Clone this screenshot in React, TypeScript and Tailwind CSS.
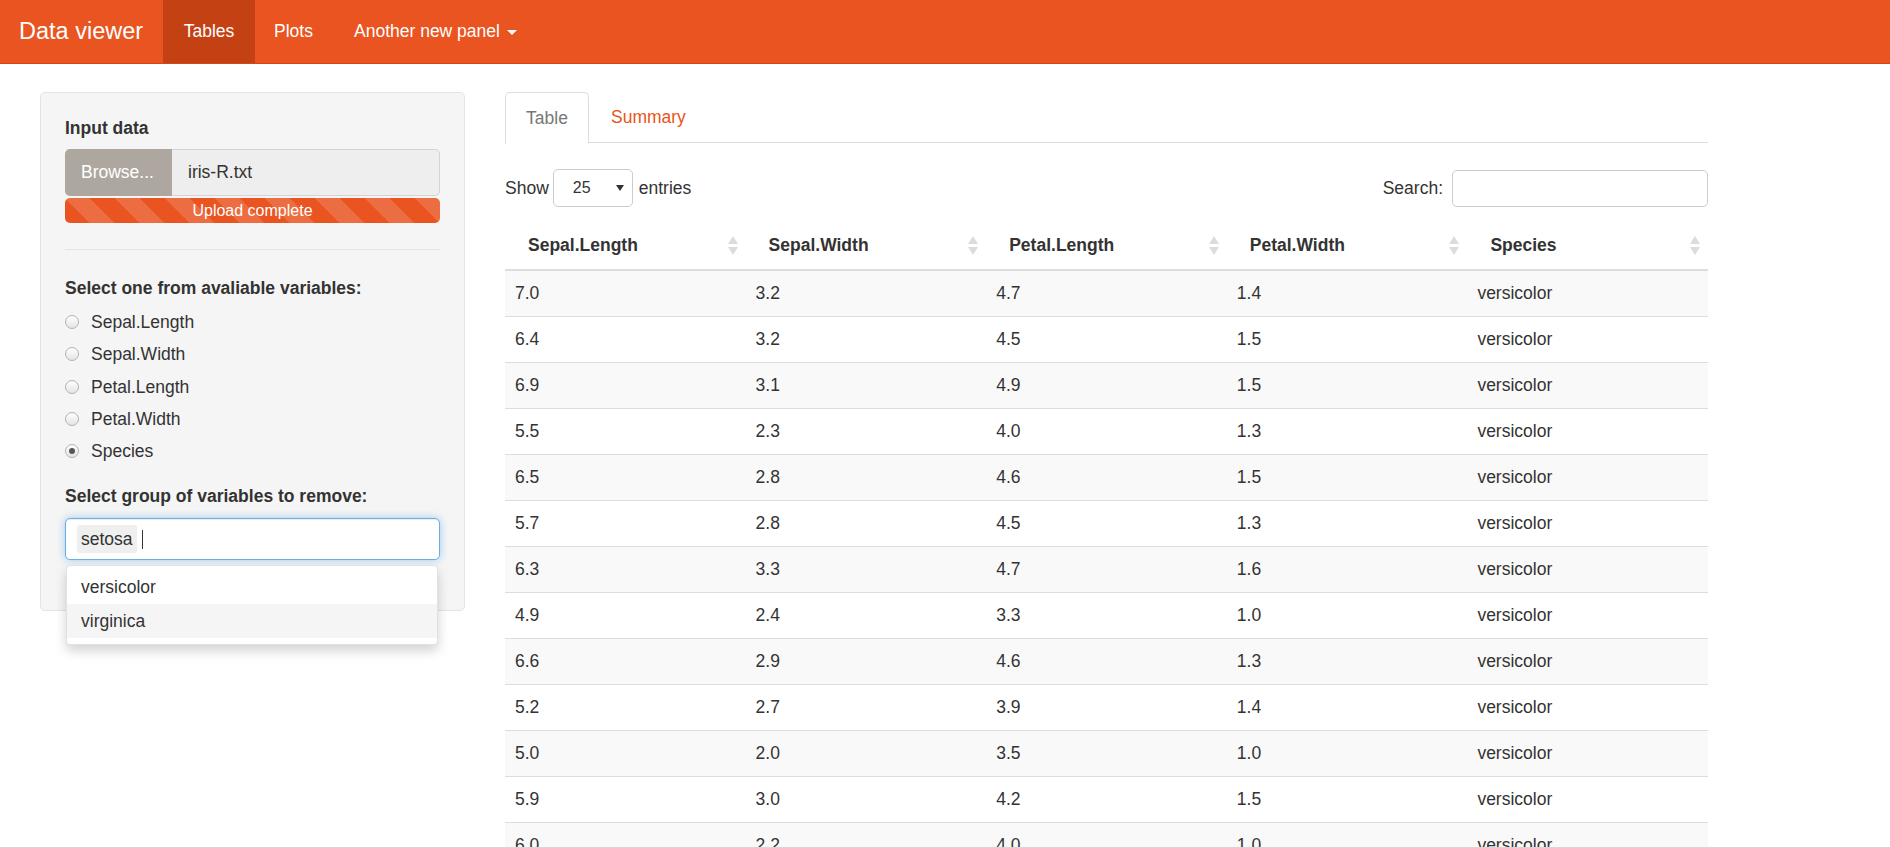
import React from "react";

const rows = [
  ["7.0", "3.2", "4.7", "1.4"],
  ["6.4", "3.2", "4.5", "1.5"],
  ["6.9", "3.1", "4.9", "1.5"],
  ["5.5", "2.3", "4.0", "1.3"],
  ["6.5", "2.8", "4.6", "1.5"],
  ["5.7", "2.8", "4.5", "1.3"],
  ["6.3", "3.3", "4.7", "1.6"],
  ["4.9", "2.4", "3.3", "1.0"],
  ["6.6", "2.9", "4.6", "1.3"],
  ["5.2", "2.7", "3.9", "1.4"],
  ["5.0", "2.0", "3.5", "1.0"],
  ["5.9", "3.0", "4.2", "1.5"],
  ["6.0", "2.2", "4.0", "1.0"],
  ["6.1", "2.9", "4.7", "1.4"],
];

const columns = ["Sepal.Length", "Sepal.Width", "Petal.Length", "Petal.Width", "Species"];

const SortIcon = () => (
  <svg width="10" height="19" viewBox="0 0 10 19" className="shrink-0">
    <path d="M5 0 L10 8 L0 8 Z" fill="#dcdcdc" />
    <path d="M0 11 L10 11 L5 19 Z" fill="#dcdcdc" />
  </svg>
);

const Radio = ({ label, checked }: { label: string; checked?: boolean }) => (
  <div className="flex items-center h-[32.3px]">
    <span className="w-[14px] h-[14px] rounded-full border border-[#b3b3b3] bg-[linear-gradient(#ffffff,#e4e4e4)] flex items-center justify-center">
      {checked && <span className="w-[6px] h-[6px] rounded-full bg-[#555]" />}
    </span>
    <span className="ml-[12px]">{label}</span>
  </div>
);

const Navbar = () => (
  <nav className="flex h-[64px] bg-[#e95420] border-b border-[#d34615] text-white">
    <div className="w-[163px] pl-[19px] flex items-center text-[23.5px]">Data viewer</div>
    <ul className="flex text-[17.5px]">
      <li className="w-[92px] flex items-center justify-center bg-[#c34113]">Tables</li>
      <li className="w-[80px] pl-[19px] flex items-center">Plots</li>
      <li className="pl-[19px] pr-[19px] flex items-center">
        Another new panel
        <span className="ml-[7px] mt-[2px] w-0 h-0 border-l-[5px] border-r-[5px] border-t-[5px] border-l-transparent border-r-transparent border-t-white" />
      </li>
    </ul>
  </nav>
);

const Sidebar = () => (
  <div className="w-[425px] shrink-0 relative">
    <div className="bg-[#f5f5f5] border border-[#e3e3e3] rounded-[5px] px-[24px] pt-[23px] pb-[24px]">
      <div className="font-bold h-[25px] leading-[25px]">Input data</div>
      <div className="mt-[8px] flex h-[47px]">
        <div className="w-[107px] bg-[#aea79f] text-white rounded-l-[5px] flex items-center pl-[16px]">Browse...</div>
        <div className="flex-1 bg-[#eeeeee] border border-[#d4d4d4] border-l-0 rounded-r-[5px] flex items-center pl-[16px]">iris-R.txt</div>
      </div>
      <div className="mt-[2px] h-[25px] rounded-[5px] bg-[#e95420] bg-[linear-gradient(45deg,rgba(255,255,255,.15)_25%,transparent_25%,transparent_50%,rgba(255,255,255,.15)_50%,rgba(255,255,255,.15)_75%,transparent_75%,transparent)] bg-[length:50px_50px] text-white text-[16px] flex items-center justify-center pt-[1px]">
        Upload complete
      </div>
      <div className="mt-[26px] border-t border-[#e5e5e5]" />
      <div className="mt-[26px] font-bold h-[25px] leading-[25px]">Select one from avaliable variables:</div>
      <div className="mt-[5px] flex flex-col">
        <Radio label="Sepal.Length" />
        <Radio label="Sepal.Width" />
        <Radio label="Petal.Length" />
        <Radio label="Petal.Width" />
        <Radio label="Species" checked />
      </div>
      <div className="mt-[17px] font-bold h-[25px] leading-[25px]">Select group of variables to remove:</div>
      <div className="mt-[9px] h-[42px] rounded-[5px] bg-white border border-[#66afe9] shadow-[inset_0_1px_1px_rgba(0,0,0,.075),0_0_8px_rgba(102,175,233,.6)] flex items-center pl-[11px]">
        <span className="h-[28px] px-[4px] rounded-[3px] bg-[#efefef] flex items-center">setosa</span>
        <span className="ml-[5px] w-px h-[19px] bg-[#333]" />
      </div>
      <div className="h-[26px]" />
    </div>
    <div className="absolute left-[26px] top-[473px] w-[372px] bg-white rounded-[4px] border border-[#e2e2e2] shadow-[0_6px_12px_rgba(0,0,0,.175)] pt-[4px] pb-[6px]">
      <div className="h-[34px] flex items-center pl-[14px]">versicolor</div>
      <div className="h-[34px] flex items-center pl-[14px] bg-[#f5f5f5]">virginica</div>
    </div>
  </div>
);

const MainPanel = () => (
  <div className="w-[1203px] shrink-0">
    <div className="flex h-[51px] border-b border-[#dddddd]">
      <div className="w-[84px] -mb-px h-[52px] border border-[#dddddd] border-b-white bg-white rounded-t-[5px] flex items-center justify-center text-[#777]">
        Table
      </div>
      <div className="ml-[3px] px-[19px] flex items-center text-[#e95420]">Summary</div>
    </div>
    <div className="mt-[26px] flex items-center justify-between h-[38px]">
      <div className="flex items-center">
        <span>Show</span>
        <div className="ml-[4px] w-[80px] h-[38px] border border-[#cccccc] rounded-[5px] flex items-center justify-between pl-[19px] pr-[8px] text-[16px]">
          <span>25</span>
          <span className="w-0 h-0 border-l-[4px] border-r-[4px] border-t-[6px] border-l-transparent border-r-transparent border-t-[#333]" />
        </div>
        <span className="ml-[6px]">entries</span>
      </div>
      <div className="flex items-center">
        <span>Search:</span>
        <div className="ml-[9px] w-[256px] h-[37px] border border-[#cccccc] rounded-[5px]" />
      </div>
    </div>
    <div className="mt-[14px]">
      <div className="grid grid-cols-5 h-[50px] border-b-2 border-[#dddddd] font-bold">
        {columns.map((c) => (
          <div key={c} className="flex items-center justify-between pl-[23px] pr-[8px]">
            <span>{c}</span>
            <SortIcon />
          </div>
        ))}
      </div>
      {rows.map((r, i) => (
        <div
          key={i}
          className={`grid grid-cols-5 h-[46px] border-b border-[#dddddd] ${i % 2 === 0 ? "bg-[#f9f9f9]" : "bg-white"}`}
        >
          {[...r, "versicolor"].map((v, j) => (
            <div key={j} className="flex items-center pl-[10px]">
              {v}
            </div>
          ))}
        </div>
      ))}
    </div>
  </div>
);

export default function App() {
  return (
    <div className="h-[848px] overflow-hidden border-b border-[#d6d6d6] bg-white text-[#333] text-[17.5px] font-['Liberation_Sans',Arial,sans-serif]">
      <Navbar />
      <div className="flex pl-[40px] pt-[28px] gap-[40px]">
        <Sidebar />
        <MainPanel />
      </div>
    </div>
  );
}
